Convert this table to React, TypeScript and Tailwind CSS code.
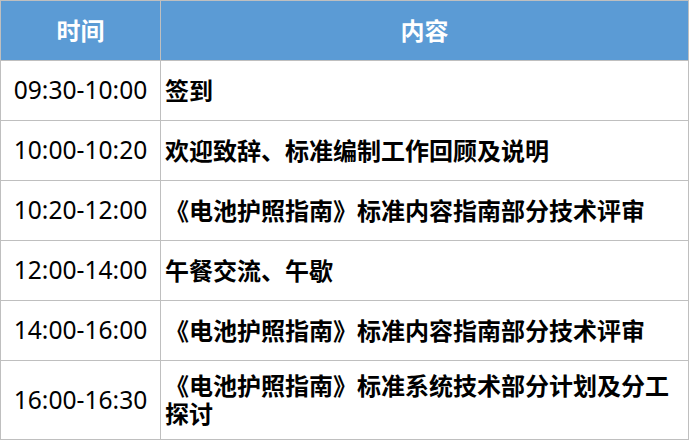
const rows = [
  { time: "09:30-10:00", content: ["签到"] },
  { time: "10:00-10:20", content: ["欢迎致辞、标准编制工作回顾及说明"] },
  { time: "10:20-12:00", content: ["《电池护照指南》标准内容指南部分技术评审"] },
  { time: "12:00-14:00", content: ["午餐交流、午歇"] },
  { time: "14:00-16:00", content: ["《电池护照指南》标准内容指南部分技术评审"] },
  { time: "16:00-16:30", content: ["《电池护照指南》标准系统技术部分计划及分工", "探讨"] },
];

const App = () => {
  return (
    <div className="w-[689px] h-[441px] bg-white overflow-hidden">
      <table className="w-[689px] border-collapse table-fixed text-[24px] font-['Noto_Sans','Noto_Sans_CJK_SC',sans-serif]">
        <colgroup>
          <col className="w-[160px]" />
          <col />
        </colgroup>
        <thead>
          <tr className="h-[60px] bg-[#5b9bd5] text-white">
            <th className="border border-[#bfbfbf] font-bold text-center p-0">时间</th>
            <th className="border border-[#bfbfbf] font-bold text-center p-0">内容</th>
          </tr>
        </thead>
        <tbody className="text-black">
          {rows.map((row) => (
            <tr key={row.time} className={row.content.length > 1 ? "h-[79px]" : "h-[60px]"}>
              <td className="border border-[#bfbfbf] text-center font-normal text-[24.6px] p-0">{row.time}</td>
              <td className="border border-[#bfbfbf] pl-[4px] pr-1 font-bold leading-[28px]">
                {row.content.map((line, i) => (
                  <div key={i}>{line}</div>
                ))}
              </td>
            </tr>
          ))}
        </tbody>
      </table>
    </div>
  );
};

export default App;
